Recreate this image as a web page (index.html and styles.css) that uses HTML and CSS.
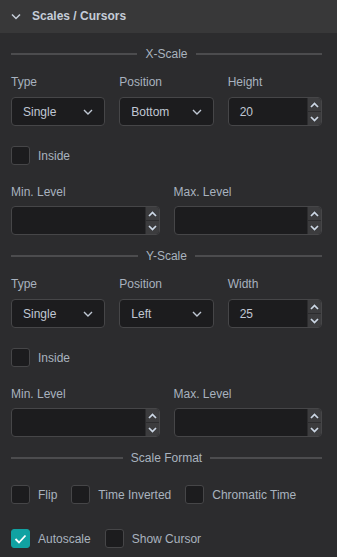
FILE: index.html
```html
<!DOCTYPE html>
<html>
<head>
<meta charset="utf-8">
<link rel="stylesheet" href="styles.css">
</head>
<body>
<div class="panel">
  <div class="header">
    <svg class="hchev" width="10" height="7" viewBox="0 0 10 7"><path d="M1 1.5 L5 5.5 L9 1.5" fill="none" stroke="#c5cdd8" stroke-width="1.5"/></svg>
    <span class="htitle">Scales / Cursors</span>
  </div>
  <div class="content">
    <div class="divider"><span class="line"></span><span class="dtext">X-Scale</span><span class="line"></span></div>
    <div class="grid3">
      <div class="field"><div class="label">Type</div>
        <div class="select"><span>Single</span><svg width="10" height="6" viewBox="0 0 10 6"><path d="M1 1 L5 5 L9 1" fill="none" stroke="#c0c8d4" stroke-width="1.4"/></svg></div></div>
      <div class="field"><div class="label">Position</div>
        <div class="select"><span>Bottom</span><svg width="10" height="6" viewBox="0 0 10 6"><path d="M1 1 L5 5 L9 1" fill="none" stroke="#c0c8d4" stroke-width="1.4"/></svg></div></div>
      <div class="field"><div class="label">Height</div>
        <div class="num"><span class="val">20</span>
          <div class="spin"><div class="sb"><svg width="9" height="6" viewBox="0 0 9 6"><path d="M1 5 L4.5 1.5 L8 5" fill="none" stroke="#cdd8e6" stroke-width="1.7"/></svg></div><div class="sb"><svg width="9" height="6" viewBox="0 0 9 6"><path d="M1 1 L4.5 4.5 L8 1" fill="none" stroke="#cdd8e6" stroke-width="1.7"/></svg></div></div></div></div>
    </div>
    <div class="check"><span class="box"></span><span class="clabel">Inside</span></div>
    <div class="grid2">
      <div class="field"><div class="label">Min. Level</div>
        <div class="num"><span class="val"></span>
          <div class="spin"><div class="sb"><svg width="9" height="6" viewBox="0 0 9 6"><path d="M1 5 L4.5 1.5 L8 5" fill="none" stroke="#cdd8e6" stroke-width="1.7"/></svg></div><div class="sb"><svg width="9" height="6" viewBox="0 0 9 6"><path d="M1 1 L4.5 4.5 L8 1" fill="none" stroke="#cdd8e6" stroke-width="1.7"/></svg></div></div></div></div>
      <div class="field"><div class="label">Max. Level</div>
        <div class="num"><span class="val"></span>
          <div class="spin"><div class="sb"><svg width="9" height="6" viewBox="0 0 9 6"><path d="M1 5 L4.5 1.5 L8 5" fill="none" stroke="#cdd8e6" stroke-width="1.7"/></svg></div><div class="sb"><svg width="9" height="6" viewBox="0 0 9 6"><path d="M1 1 L4.5 4.5 L8 1" fill="none" stroke="#cdd8e6" stroke-width="1.7"/></svg></div></div></div></div>
    </div>

    <div class="divider"><span class="line"></span><span class="dtext">Y-Scale</span><span class="line"></span></div>
    <div class="grid3">
      <div class="field"><div class="label">Type</div>
        <div class="select"><span>Single</span><svg width="10" height="6" viewBox="0 0 10 6"><path d="M1 1 L5 5 L9 1" fill="none" stroke="#c0c8d4" stroke-width="1.4"/></svg></div></div>
      <div class="field"><div class="label">Position</div>
        <div class="select"><span>Left</span><svg width="10" height="6" viewBox="0 0 10 6"><path d="M1 1 L5 5 L9 1" fill="none" stroke="#c0c8d4" stroke-width="1.4"/></svg></div></div>
      <div class="field"><div class="label">Width</div>
        <div class="num"><span class="val">25</span>
          <div class="spin"><div class="sb"><svg width="9" height="6" viewBox="0 0 9 6"><path d="M1 5 L4.5 1.5 L8 5" fill="none" stroke="#cdd8e6" stroke-width="1.7"/></svg></div><div class="sb"><svg width="9" height="6" viewBox="0 0 9 6"><path d="M1 1 L4.5 4.5 L8 1" fill="none" stroke="#cdd8e6" stroke-width="1.7"/></svg></div></div></div></div>
    </div>
    <div class="check"><span class="box"></span><span class="clabel">Inside</span></div>
    <div class="grid2">
      <div class="field"><div class="label">Min. Level</div>
        <div class="num"><span class="val"></span>
          <div class="spin"><div class="sb"><svg width="9" height="6" viewBox="0 0 9 6"><path d="M1 5 L4.5 1.5 L8 5" fill="none" stroke="#cdd8e6" stroke-width="1.7"/></svg></div><div class="sb"><svg width="9" height="6" viewBox="0 0 9 6"><path d="M1 1 L4.5 4.5 L8 1" fill="none" stroke="#cdd8e6" stroke-width="1.7"/></svg></div></div></div></div>
      <div class="field"><div class="label">Max. Level</div>
        <div class="num"><span class="val"></span>
          <div class="spin"><div class="sb"><svg width="9" height="6" viewBox="0 0 9 6"><path d="M1 5 L4.5 1.5 L8 5" fill="none" stroke="#cdd8e6" stroke-width="1.7"/></svg></div><div class="sb"><svg width="9" height="6" viewBox="0 0 9 6"><path d="M1 1 L4.5 4.5 L8 1" fill="none" stroke="#cdd8e6" stroke-width="1.7"/></svg></div></div></div></div>
    </div>

    <div class="divider"><span class="line"></span><span class="dtext">Scale Format</span><span class="line"></span></div>
    <div class="row">
      <div class="check inl"><span class="box"></span><span class="clabel">Flip</span></div>
      <div class="check inl"><span class="box"></span><span class="clabel">Time Inverted</span></div>
      <div class="check inl"><span class="box"></span><span class="clabel">Chromatic Time</span></div>
    </div>
    <div class="row row2">
      <div class="check inl"><span class="box on"><svg width="13" height="10" viewBox="0 0 13 10"><path d="M1.5 5 L5 8.5 L11.5 1.5" fill="none" stroke="#ffffff" stroke-width="1.8"/></svg></span><span class="clabel">Autoscale</span></div>
      <div class="check inl"><span class="box"></span><span class="clabel">Show Cursor</span></div>
    </div>
  </div>
</div>
</body>
</html>
```

FILE: styles.css
```css
html, body {
  margin: 0;
  padding: 0;
  background: #2c2c2e;
}
body {
  width: 337px;
  height: 557px;
  overflow: hidden;
  font-family: "Liberation Sans", Arial, sans-serif;
  font-size: 12px;
}
.panel {
  width: 337px;
  height: 557px;
  background: #2c2c2e;
  box-sizing: border-box;
}
.header {
  height: 33px;
  background: #383839;
  display: flex;
  align-items: center;
  padding-left: 11px;
  box-sizing: border-box;
}
.hchev {
  margin-right: 11px;
  margin-top: -1px;
}
.htitle {
  color: #c5cdd8;
  font-weight: bold;
  font-size: 12px;
  margin-top: -2px;
}
.content {
  padding: 14px 15px 0 11px;
}
.divider {
  height: 14px;
  display: flex;
  align-items: center;
  gap: 8px;
  margin-bottom: 14px;
}
.divider .line {
  flex: 1;
  height: 2px;
  background: #4c4c4e;
}
.dtext {
  color: #a9b3bf;
  font-size: 12px;
}
.grid3 {
  display: grid;
  grid-template-columns: repeat(3, 1fr);
  gap: 14px;
}
.grid2 {
  display: grid;
  grid-template-columns: repeat(2, 1fr);
  gap: 14px;
  margin-bottom: 14px;
}
.label {
  color: #a8b2bf;
  height: 14px;
  line-height: 14px;
  margin-bottom: 8px;
}
.grid2 .label {
  margin-bottom: 7px;
}
.select {
  height: 29px;
  box-sizing: border-box;
  border: 1px solid #464648;
  border-radius: 4px;
  background: #1c1c1e;
  display: flex;
  align-items: center;
  justify-content: space-between;
  padding: 0 11px 0 11px;
  color: #c0c8d4;
}
.num {
  height: 29px;
  box-sizing: border-box;
  border: 1px solid #464648;
  border-radius: 4px;
  background: #1c1c1e;
  display: flex;
  align-items: stretch;
  color: #c0c8d4;
  overflow: hidden;
}
.num .val {
  flex: 1;
  display: flex;
  align-items: center;
  padding-left: 11px;
}
.spin {
  width: 13px;
  display: flex;
  flex-direction: column;
  gap: 1px;
  background: #2c2c2e;
  border-left: 1px solid #2c2c2e;
}
.sb {
  flex: 1;
  background: #3c3c3e;
  display: flex;
  align-items: center;
  justify-content: center;
}
.check {
  display: flex;
  align-items: center;
  height: 19px;
  margin: 20px 0;
}
.box {
  width: 19px;
  height: 19px;
  box-sizing: border-box;
  border: 1px solid #464648;
  border-radius: 3px;
  background: #1c1c1e;
  display: flex;
  align-items: center;
  justify-content: center;
  margin-right: 8px;
}
.box.on {
  background: #11a2a2;
  border-color: #11a2a2;
}
.clabel {
  color: #a9b3bf;
}
.row {
  display: flex;
  margin-top: 20px;
}
.row .check {
  margin: 0 14px 0 0;
}
.row2 {
  margin-top: 25px;
}
```
